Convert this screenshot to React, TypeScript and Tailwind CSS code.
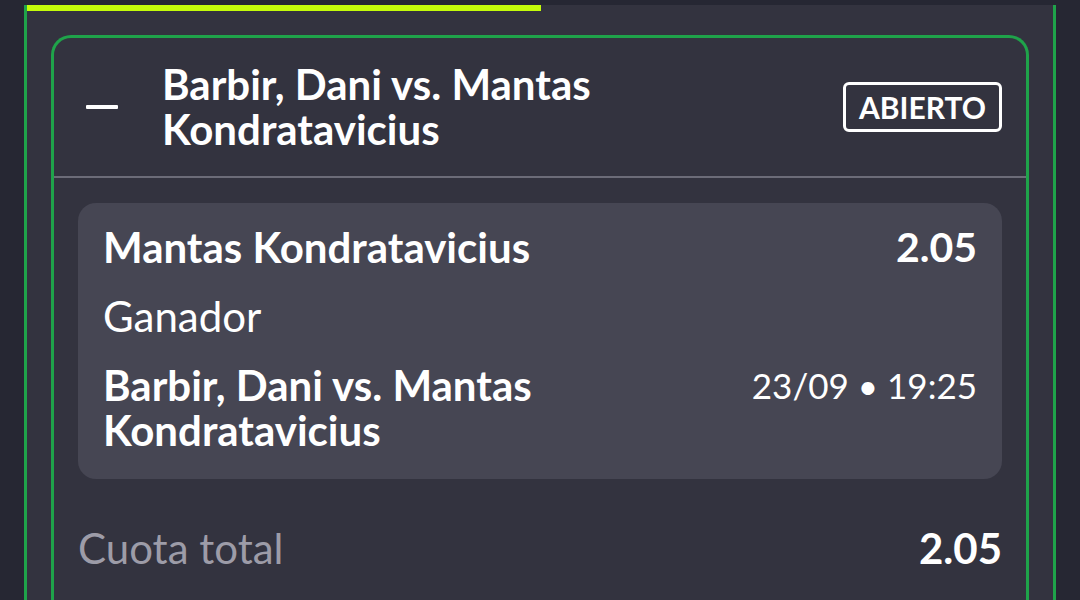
import React from 'react';

const font = { fontFamily: 'Lato, "Noto Sans", sans-serif' };

function MinusIcon() {
  return <div className="h-[4px] w-[32px] rounded-[1px] bg-white" />;
}

export default function App() {
  return (
    <div className="h-[600px] w-[1080px] overflow-hidden bg-[#262733]" style={font}>
      <div className="ml-[24px] h-full w-[1032px] border-x-[3px] border-[#1fa34a] bg-[#33333f]">
        {/* progress bar */}
        <div className="mt-[5px] h-[6px] w-[514px] bg-[#c4fb0a]" />

        {/* bet card */}
        <div className="mx-[24px] mt-[24px] rounded-t-[20px] border-x-[3px] border-t-[3px] border-[#1fa34a] pb-[40px]">
          <div className="flex h-[138px] items-center pl-[32px] pr-[24px]">
            <MinusIcon />
            <div className="ml-[44px] flex-1 text-[42px] font-bold leading-[45px] text-white">
              Barbir, Dani vs. Mantas
              <br />
              Kondratavicius
            </div>
            <div className="flex h-[50px] items-center rounded-[6px] border-[3px] border-white px-[13px] text-[30px] font-bold leading-none text-white">
              ABIERTO
            </div>
          </div>
          <div className="h-[2px] bg-[#6c6c78]" />

          <div className="px-[24px] pt-[25px]">
            <div className="flex flex-col gap-[25px] rounded-[18px] bg-[#464653] px-[25px] pb-[26px] pt-[22px] text-white">
              <div className="flex items-start justify-between text-[42px] font-bold leading-[44px]">
                <span>Mantas Kondratavicius</span>
                <span className="text-[41px]">2.05</span>
              </div>
              <div className="text-[42px] leading-[44px]">Ganador</div>
              <div className="flex items-start justify-between">
                <div className="text-[42px] font-bold leading-[45px]">
                  Barbir, Dani vs. Mantas
                  <br />
                  Kondratavicius
                </div>
                <div className="text-[35px] leading-[44px]">23/09 • 19:25</div>
              </div>
            </div>

            <div className="mt-[45px] flex items-center justify-between text-[42px] leading-[48px]">
              <span className="text-[#9d9ca8]">Cuota total</span>
              <span className="font-bold text-white">2.05</span>
            </div>
          </div>
        </div>
      </div>
    </div>
  );
}
